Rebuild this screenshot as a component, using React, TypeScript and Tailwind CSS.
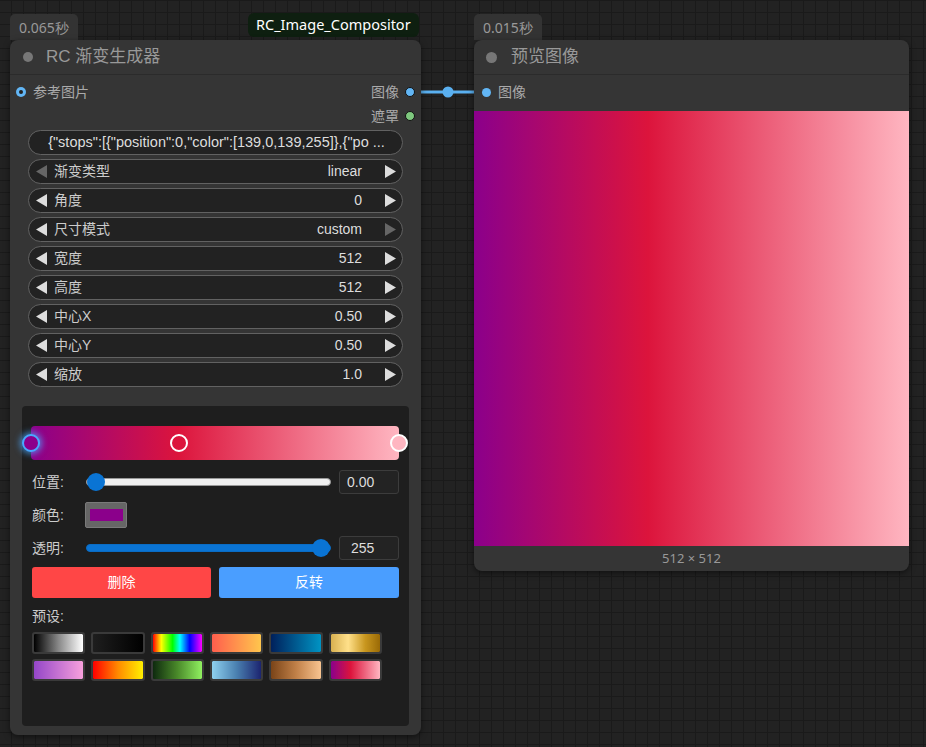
import React from 'react'

const GRADIENT = 'linear-gradient(90deg, #8b008b 0%, #dc143c 40%, #ffb6c1 100%)'

const font = "font-['Liberation_Sans','Noto_Sans_CJK_SC',sans-serif]"

function LeftArrow({ dim }: { dim?: boolean }) {
  return (
    <svg width="11" height="13" viewBox="0 0 11 13" className="shrink-0">
      <polygon points="11,0 11,13 0,6.5" fill={dim ? '#666' : '#ddd'} />
    </svg>
  )
}

function RightArrow({ dim }: { dim?: boolean }) {
  return (
    <svg width="11" height="13" viewBox="0 0 11 13" className="block shrink-0">
      <polygon points="0,0 0,13 11,6.5" fill={dim ? '#666' : '#ddd'} />
    </svg>
  )
}

interface WidgetProps {
  label: string
  value: string
  dimLeft?: boolean
  dimRight?: boolean
}

function NumberWidget({ label, value, dimLeft, dimRight }: WidgetProps) {
  return (
    <div className="flex h-[25px] items-center rounded-full border border-[#626262] bg-[#222] pl-[7px] pr-[6px] text-[14px] text-[#ddd]">
      <LeftArrow dim={dimLeft} />
      <span className="ml-[7px] text-[#ccc]">{label}</span>
      <span className="ml-auto">{value}</span>
      <span className="ml-[23px]">
        <RightArrow dim={dimRight} />
      </span>
    </div>
  )
}

const presets = [
  'linear-gradient(90deg,#000,#888 50%,#fff)',
  'linear-gradient(90deg,#1e1e1e,#000)',
  'linear-gradient(90deg,#f00,#ff0 17%,#0f0 40%,#0ff 55%,#00f 75%,#f0f)',
  'linear-gradient(90deg,#ff5e4d,#ffc64d)',
  'linear-gradient(90deg,#00205b,#0094c4)',
  'linear-gradient(90deg,#d8b050,#ffe08a 35%,#c8961e 70%,#9a6a06)',
  'linear-gradient(90deg,#9446c8,#f8a0dc)',
  'linear-gradient(90deg,#f00,#ff8a00 50%,#fff000)',
  'linear-gradient(90deg,#0e2a0e,#4a8a2a 50%,#90f060)',
  'linear-gradient(90deg,#8ed0ee,#4a80b0 50%,#1c2470)',
  'linear-gradient(90deg,#7a4418,#c08048 50%,#f8c490)',
  'linear-gradient(90deg,#8b008b,#dc143c 40%,#ffb6c1)',
]

function Slider({ filled, thumb }: { filled: boolean; thumb: number }) {
  return (
    <div className="relative h-[18px] w-[245px]">
      <div
        className={`absolute left-0 right-0 top-[5px] h-[8px] rounded-full border ${
          filled ? 'border-[#0a6cc4] bg-[#0a74d4]' : 'border-[#999] bg-[#efefef]'
        }`}
      />
      <div
        className="absolute top-0 h-[18px] w-[18px] rounded-full bg-[#0a74d4]"
        style={{ left: thumb - 9 }}
      />
    </div>
  )
}

function StopHandle({ x, fill, active }: { x: number; fill: string; active?: boolean }) {
  return (
    <div
      className={`absolute top-[8px] h-[18px] w-[18px] rounded-full border-[2.5px] ${
        active ? 'border-[#4aa8ff] shadow-[0_0_6px_2px_rgba(74,168,255,0.7)]' : 'border-white'
      }`}
      style={{ left: x - 9, background: fill }}
    />
  )
}

function GradientEditor() {
  return (
    <div className="mx-[12px] mt-[19px] flex h-[320px] flex-col rounded-[4px] bg-[#1e1e1e] px-[10px] pt-[20px]">
      <div className="relative -ml-[1px] h-[34px] w-[368px] rounded-[4px]" style={{ background: GRADIENT }}>
        <StopHandle x={0} fill="#8b008b" active />
        <StopHandle x={148} fill="#dc143c" />
        <StopHandle x={368} fill="#ffb6c1" />
      </div>

      <div className="mt-[10px] flex h-[24px] items-center text-[14px] text-[#ccc]">
        <span className="w-[54px]">位置:</span>
        <Slider filled={false} thumb={10} />
        <div className="ml-auto flex h-[24px] w-[60px] items-center rounded-[3px] border border-[#3c3c3c] bg-[#232323] pl-[7px] text-[#ddd]">
          0.00
        </div>
      </div>

      <div className="mt-[8px] flex h-[26px] items-center text-[14px] text-[#ccc]">
        <span className="w-[53px]">颜色:</span>
        <div className="flex h-[26px] w-[42px] items-center justify-center rounded-[2px] border border-[#7a7a7a] bg-[#666]">
          <div className="h-[12px] w-[33px] bg-[#8b008b]" />
        </div>
      </div>

      <div className="mt-[8px] flex h-[24px] items-center text-[14px] text-[#ccc]">
        <span className="w-[54px]">透明:</span>
        <Slider filled thumb={235} />
        <div className="ml-auto flex h-[24px] w-[60px] items-center rounded-[3px] border border-[#3c3c3c] bg-[#232323] pl-[11px] text-[#ddd]">
          255
        </div>
      </div>

      <div className="mt-[7px] flex h-[31px] gap-[8px] text-[14px] text-white">
        <button className="flex w-[179px] items-center justify-center rounded-[3px] bg-[#ff4646]">删除</button>
        <button className="flex flex-1 items-center justify-center rounded-[3px] bg-[#4a9eff]">反转</button>
      </div>

      <div className="mt-[10px] h-[16px] text-[14px] leading-[16px] text-[#ccc]">预设:</div>

      <div className="mt-[8px] grid w-[350px] grid-cols-6 gap-x-[6px] gap-y-[5px]">
        {presets.map((p, i) => (
          <div
            key={i}
            className="h-[22px] rounded-[3px] border-2 border-[#3a3a3a]"
            style={{ background: p, backgroundClip: 'padding-box' }}
          />
        ))}
      </div>
    </div>
  )
}

function SlotDot({ color, ring }: { color: string; ring?: boolean }) {
  return ring ? (
    <span className="flex h-[10px] w-[10px] shrink-0 items-center justify-center rounded-full" style={{ background: color }}>
      <span className="block h-[4px] w-[4px] rounded-full bg-[#222]" />
    </span>
  ) : (
    <span className="block h-[10px] w-[10px] shrink-0 rounded-full border border-[#111]" style={{ background: color }} />
  )
}

function LeftNode() {
  return (
    <div className="absolute left-[10px] top-[40px] flex h-[695px] w-[411px] flex-col rounded-[8px] bg-[#353535] shadow-[0_2px_6px_rgba(0,0,0,0.5)]">
      <div className="flex h-[35px] items-center border-b border-[#2b2b2b] pl-[13px]">
        <span className="h-[10px] w-[10px] rounded-full bg-[#777]" />
        <span className="ml-[13px] text-[17px] text-[#999]">RC 渐变生成器</span>
      </div>

      <div className="mt-[5px] flex h-[24px] items-center pl-[6px] pr-[6px] text-[14px] text-[#aaa]">
        <SlotDot color="#62b6f5" ring />
        <span className="ml-[7px]">参考图片</span>
        <span className="ml-auto">图像</span>
        <span className="ml-[6px]">
          <SlotDot color="#62b6f5" />
        </span>
      </div>
      <div className="flex h-[24px] items-center justify-end pr-[6px] text-[14px] text-[#aaa]">
        <span>遮罩</span>
        <span className="ml-[6px]">
          <SlotDot color="#7ec87e" />
        </span>
      </div>

      <div className="mt-[2px] flex flex-col gap-[4px] px-[18px]">
        <div className="flex h-[25px] items-center justify-center rounded-full border border-[#626262] bg-[#222] pl-[2px] text-[14.5px] text-[#ddd]">
          {'{"stops":[{"position":0,"color":[139,0,139,255]},{"po  ...'}
        </div>
        <NumberWidget label="渐变类型" value="linear" dimLeft />
        <NumberWidget label="角度" value="0" />
        <NumberWidget label="尺寸模式" value="custom" dimRight />
        <NumberWidget label="宽度" value="512" />
        <NumberWidget label="高度" value="512" />
        <NumberWidget label="中心X" value="0.50" />
        <NumberWidget label="中心Y" value="0.50" />
        <NumberWidget label="缩放" value="1.0" />
      </div>

      <GradientEditor />
    </div>
  )
}

function RightNode() {
  return (
    <div className="absolute left-[474px] top-[40px] flex h-[531px] w-[435px] flex-col overflow-hidden rounded-[8px] bg-[#353535] shadow-[0_2px_6px_rgba(0,0,0,0.5)]">
      <div className="flex h-[35px] shrink-0 items-center border-b border-[#2b2b2b] pl-[12px]">
        <span className="h-[11px] w-[11px] rounded-full bg-[#777]" />
        <span className="ml-[14px] text-[17px] text-[#999]">预览图像</span>
      </div>
      <div className="mt-[5px] mb-[7px] flex h-[24px] shrink-0 items-center pl-[8px] text-[14px] text-[#aaa]">
        <span className="h-[9px] w-[9px] rounded-full bg-[#62b6f5]" />
        <span className="ml-[7px]">图像</span>
      </div>
      <div className="h-[435px] w-[435px] shrink-0" style={{ background: GRADIENT }} />
      <div className="flex flex-1 items-center justify-center font-['Noto_Sans',sans-serif] text-[13px] text-[#999]">512 × 512</div>
    </div>
  )
}

export default function App() {
  return (
    <div
      className={`relative h-[747px] w-[926px] overflow-hidden bg-[#222] ${font} bg-[linear-gradient(90deg,#1a1a1a_1px,transparent_1px),linear-gradient(#1a1a1a_1px,transparent_1px)] bg-[size:12px_12px] bg-[position:11px_0px]`}
    >
      <div className="absolute left-[10px] top-[14px] flex h-[26px] items-center rounded-t-[5px] bg-[#333] px-[9px] font-['Noto_Sans',sans-serif] text-[14px] text-[#999]">
        0.065秒
      </div>
      <div className="absolute left-[248px] top-[13px] flex h-[24px] items-center rounded-[6px] bg-[#0e1f10] px-[8px] font-['Noto_Sans',sans-serif] text-[14.5px] text-white">
        RC_Image_Compositor
      </div>
      <div className="absolute left-[474px] top-[14px] flex h-[26px] items-center rounded-t-[5px] bg-[#333] px-[9px] font-['Noto_Sans',sans-serif] text-[14px] text-[#999]">
        0.015秒
      </div>

      <svg className="absolute left-0 top-0" width="926" height="747">
        <line x1="415" y1="92" x2="482" y2="92" stroke="#5ab0f0" strokeWidth="3" />
        <circle cx="448" cy="92" r="5.5" fill="#5ab0f0" />
      </svg>

      <LeftNode />
      <RightNode />
    </div>
  )
}
